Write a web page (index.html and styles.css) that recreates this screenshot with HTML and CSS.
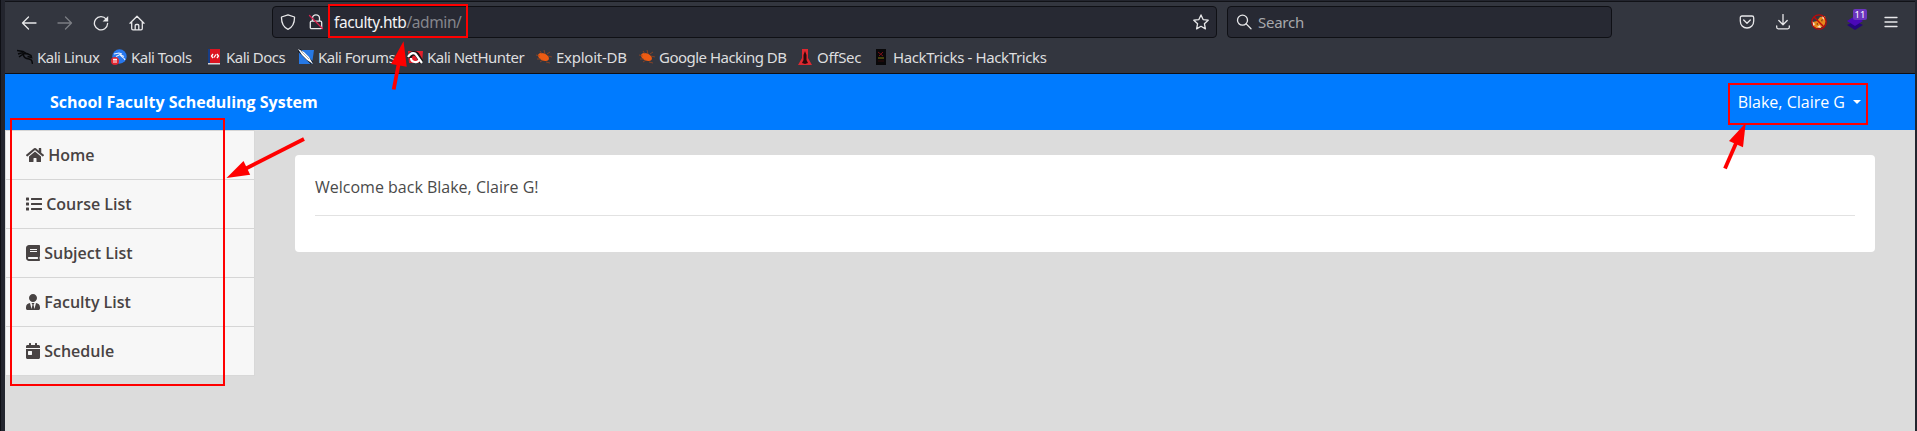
FILE: index.html
```html
<!DOCTYPE html>
<html lang="en">
<head>
<meta charset="utf-8">
<title>School Faculty Scheduling System</title>
<link rel="stylesheet" href="styles.css">
</head>
<body>
<div class="window">
  <header class="chrome">
    <div class="toolbar">
      <div class="nav-buttons">
        <svg class="ico" viewBox="0 0 16 16"><path d="M15 8H1.500M7.500 2L1.500 8l6 6"/></svg>
        <svg class="ico dim" viewBox="0 0 16 16"><path d="M1 8h13.500M8.500 2l6 6-6 6"/></svg>
        <svg class="ico" viewBox="0 0 16 16"><path d="M13.200 4.200A6.600 6.600 0 1 0 14.600 8.500"/><path class="solid" d="M15.200 1v5.600H9.600z"/></svg>
        <svg class="ico" viewBox="0 0 16 16"><path d="M1 8.200L8 1.200l7 7M2.700 7v6.600c0 .8.500 1.300 1.300 1.300h8c.8 0 1.300-.5 1.300-1.300V7M6.200 14.800V10.500c0-.6.400-1 1-1h1.600c.6 0 1 .4 1 1v4.300"/></svg>
      </div>
      <div class="field url">
        <svg class="ico shield" viewBox="0 0 16 16"><path d="M8 .8L14.500 3c.2 6-1.500 10-6.500 12.300C3 13 1.300 9 1.500 3z"/></svg>
        <svg class="ico lock" viewBox="0 0 16 16"><path d="M4.500 7V4.300a3.500 3.500 0 0 1 7 0V7M3.500 7.200h9c.7 0 1.200.5 1.200 1.200v5.100c0 .7-.5 1.200-1.200 1.200h-9c-.7 0-1.200-.5-1.200-1.200V8.400c0-.7.500-1.200 1.200-1.200z"/><path class="slash" d="M1.500 1.500l13 13"/></svg>
        <span class="address">faculty.htb<span class="path">/admin/</span></span>
        <svg class="ico star" viewBox="0 0 16 16"><path d="M8 .9l2.100 4.700 5.100.6-3.800 3.500 1 5.200L8 12.300l-4.400 2.600 1-5.200L.8 6.200l5.100-.6z"/></svg>
      </div>
      <div class="field search">
        <svg class="ico" viewBox="0 0 16 16"><circle cx="6.500" cy="6.200" r="5"/><path d="M10.200 9.900L15 14.700"/></svg>
        <span class="placeholder">Search</span>
      </div>
      <div class="actions">
        <svg class="ico" viewBox="0 0 16 16"><path d="M3 2h10c1 0 1.700.7 1.700 1.700V7c0 4-2.700 7-6.700 7S1.300 11 1.300 7V3.700C1.300 2.700 2 2 3 2zM4.700 6L8 9.200 11.300 6"/></svg>
        <svg class="ico" viewBox="0 0 16 16"><path d="M8 .5v10M3.800 6.500L8 10.700l4.200-4.200M1.700 12v1.300c0 .9.600 1.500 1.500 1.500h9.600c.9 0 1.500-.6 1.500-1.500V12"/></svg>
        <svg class="fox" viewBox="0 0 16 16"><path fill="#e8891c" d="M2 8l4-1 3-4 5-1 1 5-2 5-4 2H5l-3-2z"/><path fill="#f3dfc5" d="M1 7l3 3-2 3zM11 2l3 1-2 3zM6 13l3-2 1 3z"/><path fill="#7c3b10" d="M5 10l2-1v2zM10 6l2-1-1 3z"/><circle cx="8" cy="8" r="7.200" fill="none" stroke="#bd0909" stroke-width="1.300"/><path stroke="#bd0909" stroke-width="1.400" d="M3 3l10 10"/></svg>
        <div class="extension">
          <svg class="layers" viewBox="0 0 16 16"><path fill="#24057d" d="M0 11l8-4 8 4-8 5z"/><path fill="#4a08b8" d="M0 7l8-5 8 5-8 5z"/></svg>
          <span class="badge">11</span>
        </div>
        <svg class="ico" viewBox="0 0 16 16"><path d="M2 3.500h12M2 8h12M2 12.500h12"/></svg>
      </div>
    </div>
    <nav class="bookmarks">
      <a class="mark w94"><svg viewBox="0 0 16 16"><path fill="none" stroke="#08090b" stroke-width="1.500" d="M0 1.500l6 1 4 2.500M1 5l5-1.500M2 8l5-3.500 4 .5M6 5c1 4 3 4.500 6 5s3 2 3.500 5M10 4.500l4 2 .5 2-4-1"/></svg>Kali Linux</a>
      <a class="mark w96"><svg viewBox="0 0 16 16"><circle cx="8.500" cy="7.500" r="7.200" fill="#2777ed"/><path fill="none" stroke="#e9f1ff" stroke-width="1.100" d="M3 5l5-1 3 1M5 7.500l4-2 4 2M9 5c0 3 4 3 5 6"/><circle cx="4" cy="12" r="4" fill="#e12531"/><path stroke="#fff" stroke-width="1" d="M2 10.300h4M3 10v4M5 10v4"/></svg>Kali Tools</a>
      <a class="mark w91"><svg viewBox="0 0 16 16"><path fill="#173d86" d="M2 0h2v14H2z"/><path fill="#dc1420" d="M4 0h10v14H4z"/><path fill="#d9d6d6" d="M2 14h12v1.500H2z"/><path fill="none" stroke="#fff" stroke-width="1.300" d="M7 5L5.500 7 7 9M11 5l1.500 2L11 9M8 8.500l2-3"/></svg>Kali Docs</a>
      <a class="mark w109"><svg viewBox="0 0 16 16"><path fill="#2678e5" d="M1 1h15l-2 14H1z"/><path stroke="#111827" stroke-width="3.500" d="M1 1l13 13"/><path fill="#fff" d="M0 0l6 3 5 5 4 7-6-4-5-5z"/><path stroke="#999" stroke-width=".8" d="M3 2l8 8"/></svg>Kali Forums</a>
      <a class="mark w129"><svg viewBox="0 0 16 16"><path fill="#e51f2b" d="M1 2h15l-1 12H2z"/><path fill="none" stroke="#151515" stroke-width="4.500" d="M2 9c2-6 7-6 9-2l4 7"/><path fill="none" stroke="#fff" stroke-width="2.200" d="M1 8c3-5 7-5 9-1l5 7M4 9c0 5 7 5 8 2"/></svg>Kali NetHunter</a>
      <a class="mark w103"><svg viewBox="0 0 16 16"><ellipse cx="7.500" cy="8" rx="5.800" ry="3.600" transform="rotate(25 7.500 8)" fill="#ee5b12"/><path fill="none" stroke="#a9471b" stroke-width=".7" d="M0 6l4 1M4 2l2 3M8 1l1 4M1 10h4M4 13l3-2M10 13l4 1M12 7l4 1M11 5l3-2"/></svg>Exploit-DB</a>
      <a class="mark w158"><svg viewBox="0 0 16 16"><ellipse cx="7.500" cy="8" rx="5.800" ry="3.600" transform="rotate(25 7.500 8)" fill="#ee5b12"/><path fill="none" stroke="#a9471b" stroke-width=".7" d="M0 6l4 1M4 2l2 3M8 1l1 4M1 10h4M4 13l3-2M10 13l4 1M12 7l4 1M11 5l3-2"/></svg>Google Hacking DB</a>
      <a class="mark w76"><svg viewBox="0 0 16 16"><path fill="#df2830" d="M5 0h6v9l4 7H1l4-7z"/><path fill="#2b090c" d="M8 2l1.500 4v5l1.500 3-3 1-3-1 1.500-3V6z"/></svg>OffSec</a>
      <a class="mark hack"><svg viewBox="0 0 16 16"><path fill="#090809" d="M3 0h10v16H3z"/><path stroke="#7b1018" d="M5 3l5 4M10 3L6 7"/><path stroke="#817d13" d="M5 9h6"/><path stroke="#320b0d" d="M5 12h6"/></svg>HackTricks - HackTricks</a>
    </nav>
  </header>

  <div class="page">
    <div class="topbar">
      <strong>School Faculty Scheduling System</strong>
      <a class="account">Blake, Claire G <i class="caret"></i></a>
    </div>
    <div class="body">
      <nav class="sidebar">
        <a class="item"><svg class="i18" viewBox="0 0 576 512"><path d="M280.370 148.260L96 300.110V464a16 16 0 0 0 16 16l112.060-.29a16 16 0 0 0 15.920-16V368a16 16 0 0 1 16-16h64a16 16 0 0 1 16 16v95.640a16 16 0 0 0 16 16.050L464 480a16 16 0 0 0 16-16V300L295.670 148.260a12.190 12.190 0 0 0-15.300 0zM571.600 251.470L488 182.560V44.050a12 12 0 0 0-12-12h-56a12 12 0 0 0-12 12v72.610L318.470 43a48 48 0 0 0-61 0L4.340 251.470a12 12 0 0 0-1.600 16.900l25.500 31A12 12 0 0 0 45.150 301l235.220-193.740a12.190 12.190 0 0 1 15.300 0L530.900 301a12 12 0 0 0 16.900-1.600l25.500-31a12 12 0 0 0-1.700-16.930z"/></svg>Home</a>
        <a class="item"><svg class="i16" viewBox="0 0 512 512"><path d="M80 368H16a16 16 0 0 0-16 16v64a16 16 0 0 0 16 16h64a16 16 0 0 0 16-16v-64a16 16 0 0 0-16-16zm0-320H16A16 16 0 0 0 0 64v64a16 16 0 0 0 16 16h64a16 16 0 0 0 16-16V64a16 16 0 0 0-16-16zm0 160H16a16 16 0 0 0-16 16v64a16 16 0 0 0 16 16h64a16 16 0 0 0 16-16v-64a16 16 0 0 0-16-16zm416 176H176a16 16 0 0 0-16 16v32a16 16 0 0 0 16 16h320a16 16 0 0 0 16-16v-32a16 16 0 0 0-16-16zm0-320H176a16 16 0 0 0-16 16v32a16 16 0 0 0 16 16h320a16 16 0 0 0 16-16V80a16 16 0 0 0-16-16zm0 160H176a16 16 0 0 0-16 16v32a16 16 0 0 0 16 16h320a16 16 0 0 0 16-16v-32a16 16 0 0 0-16-16z"/></svg>Course List</a>
        <a class="item"><svg class="i14" viewBox="0 0 448 512"><path d="M448 360V24c0-13.300-10.700-24-24-24H96C43 0 0 43 0 96v320c0 53 43 96 96 96h328c13.300 0 24-10.700 24-24v-16c0-7.500-3.500-14.300-8.900-18.700-4.200-15.400-4.200-59.300 0-74.700 5.400-4.300 8.900-11.100 8.900-18.600zM128 134c0-3.300 2.700-6 6-6h212c3.300 0 6 2.700 6 6v20c0 3.300-2.700 6-6 6H134c-3.300 0-6-2.700-6-6v-20zm0 64c0-3.300 2.700-6 6-6h212c3.300 0 6 2.700 6 6v20c0 3.300-2.700 6-6 6H134c-3.300 0-6-2.700-6-6v-20zm253.400 250H96c-17.700 0-32-14.300-32-32 0-17.600 14.400-32 32-32h285.400c-1.900 17.100-1.900 46.900 0 64z"/></svg>Subject List</a>
        <a class="item"><svg class="i14" viewBox="0 0 448 512"><path d="M224 256c70.700 0 128-57.300 128-128S294.700 0 224 0 96 57.300 96 128s57.300 128 128 128zm95.800 32.600L272 480l-32-136 32-56h-96l32 56-32 136-47.800-191.400C56.900 292 0 350.300 0 422.400V464c0 26.500 21.500 48 48 48h352c26.500 0 48-21.500 48-48v-41.600c0-72.100-56.900-130.400-128.200-133.800z"/></svg>Faculty List</a>
        <a class="item"><svg class="i14" viewBox="0 0 448 512"><path d="M0 464c0 26.500 21.500 48 48 48h352c26.500 0 48-21.500 48-48V192H0v272zm64-192c0-8.800 7.200-16 16-16h96c8.800 0 16 7.200 16 16v96c0 8.800-7.200 16-16 16H80c-8.800 0-16-7.200-16-16v-96zM400 64h-48V16c0-8.800-7.200-16-16-16h-32c-8.800 0-16 7.200-16 16v48H160V16c0-8.800-7.200-16-16-16h-32c-8.800 0-16 7.200-16 16v48H48C21.500 64 0 85.500 0 112v48h448v-48c0-26.500-21.500-48-48-48z"/></svg>Schedule</a>
      </nav>
      <main class="content">
        <section class="card">
          <p>Welcome back Blake, Claire G!</p>
          <hr>
        </section>
      </main>
    </div>
  </div>
</div>

<svg class="annotations" viewBox="0 0 1917 431">
  <g class="frames">
    <rect x="11" y="119" width="213" height="266"/>
    <rect x="329" y="5" width="138" height="32"/>
    <rect x="1729" y="84" width="138" height="40"/>
  </g>
  <g class="shafts">
    <path d="M304 139L246 168.500"/>
    <path d="M393.700 89.500L399 62"/>
    <path d="M1725 168.500L1737 141"/>
  </g>
  <g class="heads">
    <path d="M226.500 178L243.500 161l6.700 13.800z"/>
    <path d="M403.500 41.300L391 64l15.700 2.700z"/>
    <path d="M1745.700 123L1729 141l14 6.300z"/>
  </g>
</svg>
</body>
</html>
```

FILE: styles.css
```css
* { box-sizing: border-box; }

body {
  margin: 0;
  width: 1917px;
  height: 431px;
  overflow: hidden;
  background: #23252e;
  font-family: "Open Sans", "Noto Sans", sans-serif;
  font-size: 16px;
  line-height: 24px;
}

.window {
  height: 431px;
  padding: 1px 2px 0 4px;
  border-left: 1px solid #0e0f14;
  display: flex;
  flex-direction: column;
}

/* Browser chrome */
.chrome {
  height: 73px;
  flex: none;
  background: #33363f;
  border-top: 1px solid #111217;
  border-bottom: 1px solid #0e0f14;
  color: #dededf;
  font-family: "Noto Sans", sans-serif;
  font-size: 15px;
  letter-spacing: -0.52px;
}

.toolbar {
  display: flex;
  height: 40px;
  padding-top: 4px;
}

.ico {
  width: 16px;
  height: 16px;
  flex: none;
  fill: none;
  stroke: #e8e8ea;
  stroke-width: 1.3;
  stroke-linecap: round;
  stroke-linejoin: round;
}
.ico.dim { stroke: #7c7e84; }
.ico .solid { fill: #e8e8ea; stroke: none; }
.ico .slash { stroke: #d9204e; }

.nav-buttons {
  width: 267px;
  height: 33px;
  padding-left: 16px;
  display: flex;
  align-items: center;
  gap: 20px;
}

.field {
  height: 32px;
  display: flex;
  align-items: center;
  background: #272933;
  border: 1px solid #0f1015;
  border-radius: 4px;
}
.url { width: 945px; padding: 0 7px 0 7px; }
.shield { margin-right: 12px; }
.lock { margin-right: 10px; }
.address { flex: 1; color: #f4f4f5; font-size: 15.5px; letter-spacing: -0.4px; }
.path { color: #85868c; }
.search { width: 385px; margin-left: 10px; padding-left: 8px; }
.placeholder { margin-left: 6px; color: #a7a8ac; letter-spacing: -0.25px; }

.actions {
  height: 32px;
  margin-left: 127px;
  display: flex;
  align-items: center;
  gap: 20px;
}
.fox, .layers { width: 16px; height: 16px; display: block; }
.extension { position: relative; }
.badge {
  position: absolute;
  left: 6px;
  top: -5px;
  width: 14px;
  height: 11px;
  border-radius: 2px;
  background: #6a35bd;
  color: #fff;
  font-size: 9.5px;
  letter-spacing: 0;
  line-height: 11px;
  text-align: center;
}

.bookmarks {
  display: flex;
  padding: 3px 0 0 12px;
  height: 31px;
}
.mark {
  display: flex;
  align-items: center;
  gap: 4px;
  height: 24px;
  white-space: nowrap;
}
.mark svg { width: 16px; height: 16px; flex: none; }
.w94 { width: 94px; }
.w96 { width: 95px; }
.w91 { width: 92px; }
.w109 { width: 109px; }
.w129 { width: 129px; }
.w103 { width: 103px; letter-spacing: -0.25px; }
.w158 { width: 158px; }
.w76 { width: 76px; letter-spacing: -0.3px; }
.hack { letter-spacing: -0.38px; }

/* Web page */
.page { flex: 1; background: #dcdcdc; }

.topbar {
  height: 56px;
  padding: 0 54px 0 45px;
  display: flex;
  align-items: center;
  justify-content: space-between;
  background: #007bff;
  color: #fff;
}
.account { display: flex; align-items: center; }
.caret {
  margin-left: 8px;
  border-top: 4px solid #fff;
  border-left: 4px solid transparent;
  border-right: 4px solid transparent;
}

.body { display: flex; align-items: flex-start; }

.sidebar {
  width: 250px;
  border: 1px solid #d8d8d8;
  border-top: 0;
  background: #f7f7f7;
}
.item {
  height: 49px;
  padding-left: 20px;
  display: flex;
  align-items: center;
  gap: 4.2px;
  border-top: 1px solid #d6d6d6;
  color: #484343;
  font-weight: 600;
}
.item svg { height: 16px; fill: #484343; }
.i18 { width: 18px; }
.i16 { width: 16px; }
.i14 { width: 14px; }

.content { flex: 1; padding: 25px 40px 0; }
.card {
  height: 97px;
  padding: 20px;
  background: #fff;
  border-radius: 4px;
  color: #4a4a4a;
}
.card p { margin: 0 0 16px; }
.card hr { margin: 0; border: 0; border-top: 1px solid #e2e2e2; }

/* Red callouts drawn over the window */
.annotations {
  position: absolute;
  left: 0;
  top: 0;
  width: 1917px;
  height: 431px;
}
.frames { fill: none; stroke: #f00; stroke-width: 2; }
.shafts { fill: none; stroke: #f00; stroke-width: 3.8; }
.heads { fill: #f00; }
```
